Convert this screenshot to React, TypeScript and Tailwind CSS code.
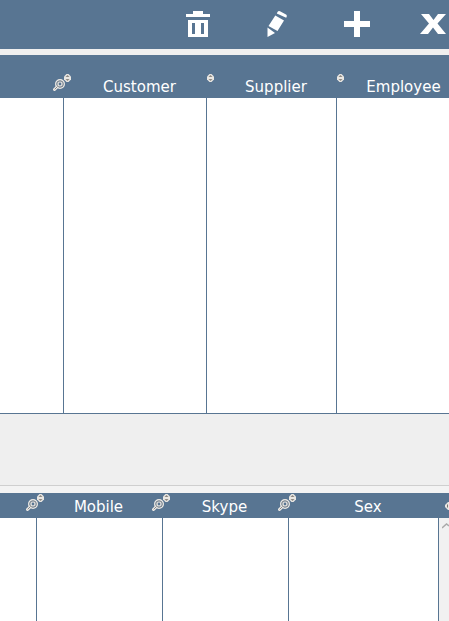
import type { ReactNode } from "react";

function SortButton({ label }: { label: string }) {
  return (
    <button type="button" aria-label={`Sort by ${label}`} className="block h-2 w-2 shrink-0">
      <svg viewBox="0 0 8 8" className="block h-2 w-2">
        <path d="M2.500 0h2L7 2.500v3L4.500 8h-2L0 5.500v-3z" fill="#e9e7e3" />
        <path d="M1.500 3L3.500 1 5.500 3zM1.500 5h4L3.500 7z" fill="#8d8882" />
      </svg>
    </button>
  );
}

function SearchButton({ label }: { label: string }) {
  return (
    <button type="button" aria-label={`Search ${label}`} className="block h-3 w-3 shrink-0">
      <svg viewBox="0 0 12 12" fill="none" className="block h-3 w-3">
        <path d="M4.500 7.500L1.500 10.500" stroke="#ece9e4" strokeWidth="3" strokeLinecap="round" />
        <circle cx="7" cy="5" r="4.300" stroke="#ece9e4" strokeWidth="1.400" />
        <circle cx="7" cy="5" r="3.100" stroke="#8b8f93" strokeWidth="1" />
        <circle cx="7" cy="5" r="2" stroke="#ece9e4" strokeWidth="1.200" />
        <path d="M4.500 7.500L1.700 10.300" stroke="#85888b" strokeWidth="1" />
      </svg>
    </button>
  );
}

type Column = { name: string; sort?: boolean; search?: boolean };

function HeaderCell({ column, tall }: { column: Column; tall?: boolean }) {
  return (
    <th scope="col" className="p-0 font-normal">
      <div className={tall ? "flex h-[43px] pt-[19px]" : "flex h-[25px] pt-px"}>
        {column.sort && <SortButton label={column.name} />}
        <span className="flex-1 pt-1 text-center leading-[18px]">{column.name}</span>
        {column.search && (
          <span className="-mr-px pt-[5px]">
            <SearchButton label={column.name || "name"} />
          </span>
        )}
      </div>
    </th>
  );
}

function ToolButton({ label, narrow, children }: { label: string; narrow?: boolean; children: ReactNode }) {
  return (
    <button
      type="button"
      aria-label={label}
      className={`flex h-full shrink-0 items-center justify-center ${narrow ? "w-18" : "w-20"}`}
    >
      <svg viewBox="0 0 26 26" fill="white" className="h-[26px] w-[26px]">
        {children}
      </svg>
    </button>
  );
}

const roles: Column[] = [
  { name: "", search: true },
  { name: "Customer", sort: true },
  { name: "Supplier", sort: true },
  { name: "Employee", sort: true },
];

const contacts: Column[] = [
  { name: "", search: true },
  { name: "Mobile", sort: true, search: true },
  { name: "Skype", sort: true, search: true },
  { name: "Sex", sort: true },
];

export default function App() {
  return (
    <main className="overflow-hidden bg-[#efefef] font-['DejaVu_Sans',Verdana,sans-serif] text-[15px] text-white">
      <div role="toolbar" aria-label="Record actions" className="flex h-[49px] overflow-hidden bg-[#587592] pb-px pl-[157px]">
        <ToolButton label="Delete">
          <path fillRule="evenodd" d="M9 0h10v3h7v3H2V3h7zM4 9h20v17H4zM8 12v11h3V12zM12.500 12v0zM17 12v11h3V12z" />
        </ToolButton>
        <ToolButton label="Edit">
          <path d="M13.500 1Q14.500-.5 16 .3L22 3.500Q23.500 4.500 22.200 6.700L12.800 2.500zM11.300 4.500L20 9.500 13.500 20 4.500 15zM3.500 16.500L11 22 3.500 26z" />
        </ToolButton>
        <ToolButton label="Add">
          <path d="M10 0h6v10h10v6H16v10h-6V16H0v-6h10z" />
        </ToolButton>
        <ToolButton label="Close" narrow>
          <path d="M1 3h8l4.500 6L18 3h8l-8.500 9.500L26 23h-8l-5-6.500L8 23H0l9-10.500z" />
        </ToolButton>
      </div>

      <table className="mt-1.5 w-[calc(100%+13px)] table-fixed border-collapse bg-white">
        <colgroup>
          <col className="w-16" />
          <col className="w-[143px]" />
          <col className="w-[130px]" />
          <col />
        </colgroup>
        <thead className="bg-[#587592]">
          <tr>
            {roles.map((c) => (
              <HeaderCell key={c.name} column={c} tall />
            ))}
          </tr>
        </thead>
        <tbody>
          <tr className="h-[316px]">
            {roles.map((c) => (
              <td
                key={c.name}
                className="p-0 shadow-[inset_-1px_-1px_0_#587592] last:shadow-[inset_0_-1px_0_#587592]"
              />
            ))}
          </tr>
        </tbody>
      </table>

      <div className="h-[72px] border-b border-[#cfcfcf]" />

      <section className="flex bg-[#f3f3f3] pt-[7px]">
        <table className="w-full table-fixed border-collapse bg-white">
          <colgroup>
            <col className="w-[37px]" />
            <col className="w-[126px]" />
            <col className="w-[126px]" />
            <col />
            <col className="w-2.5" />
          </colgroup>
          <thead className="bg-[#587592]">
            <tr>
              {contacts.map((c) => (
                <HeaderCell key={c.name} column={c} />
              ))}
              <td className="p-0">
                <button type="button" aria-label="More columns" className="flex w-full justify-end overflow-hidden">
                  <svg viewBox="0 0 4 8" className="h-2 w-1">
                    <path d="M0 3L3 0h1v8H3L0 5z" fill="#e9e7e3" />
                    <path d="M2 2.500h1v3H2z" fill="#77736f" />
                  </svg>
                </button>
              </td>
            </tr>
          </thead>
          <tbody>
            <tr className="h-[103px]">
              {contacts.map((c) => (
                <td key={c.name} className="p-0 shadow-[inset_-1px_0_0_#587592]" />
              ))}
              <td className="bg-[#f1f1f1] p-0 align-top">
                <button type="button" aria-label="Scroll up" className="flex w-full justify-end pt-1">
                  <svg viewBox="0 0 7 7" fill="none" stroke="#aaa" strokeWidth="1.500" className="h-[7px] w-[7px]">
                    <path d="M0 6L4.500 2 7 4" />
                  </svg>
                </button>
              </td>
            </tr>
          </tbody>
        </table>
      </section>
    </main>
  );
}
